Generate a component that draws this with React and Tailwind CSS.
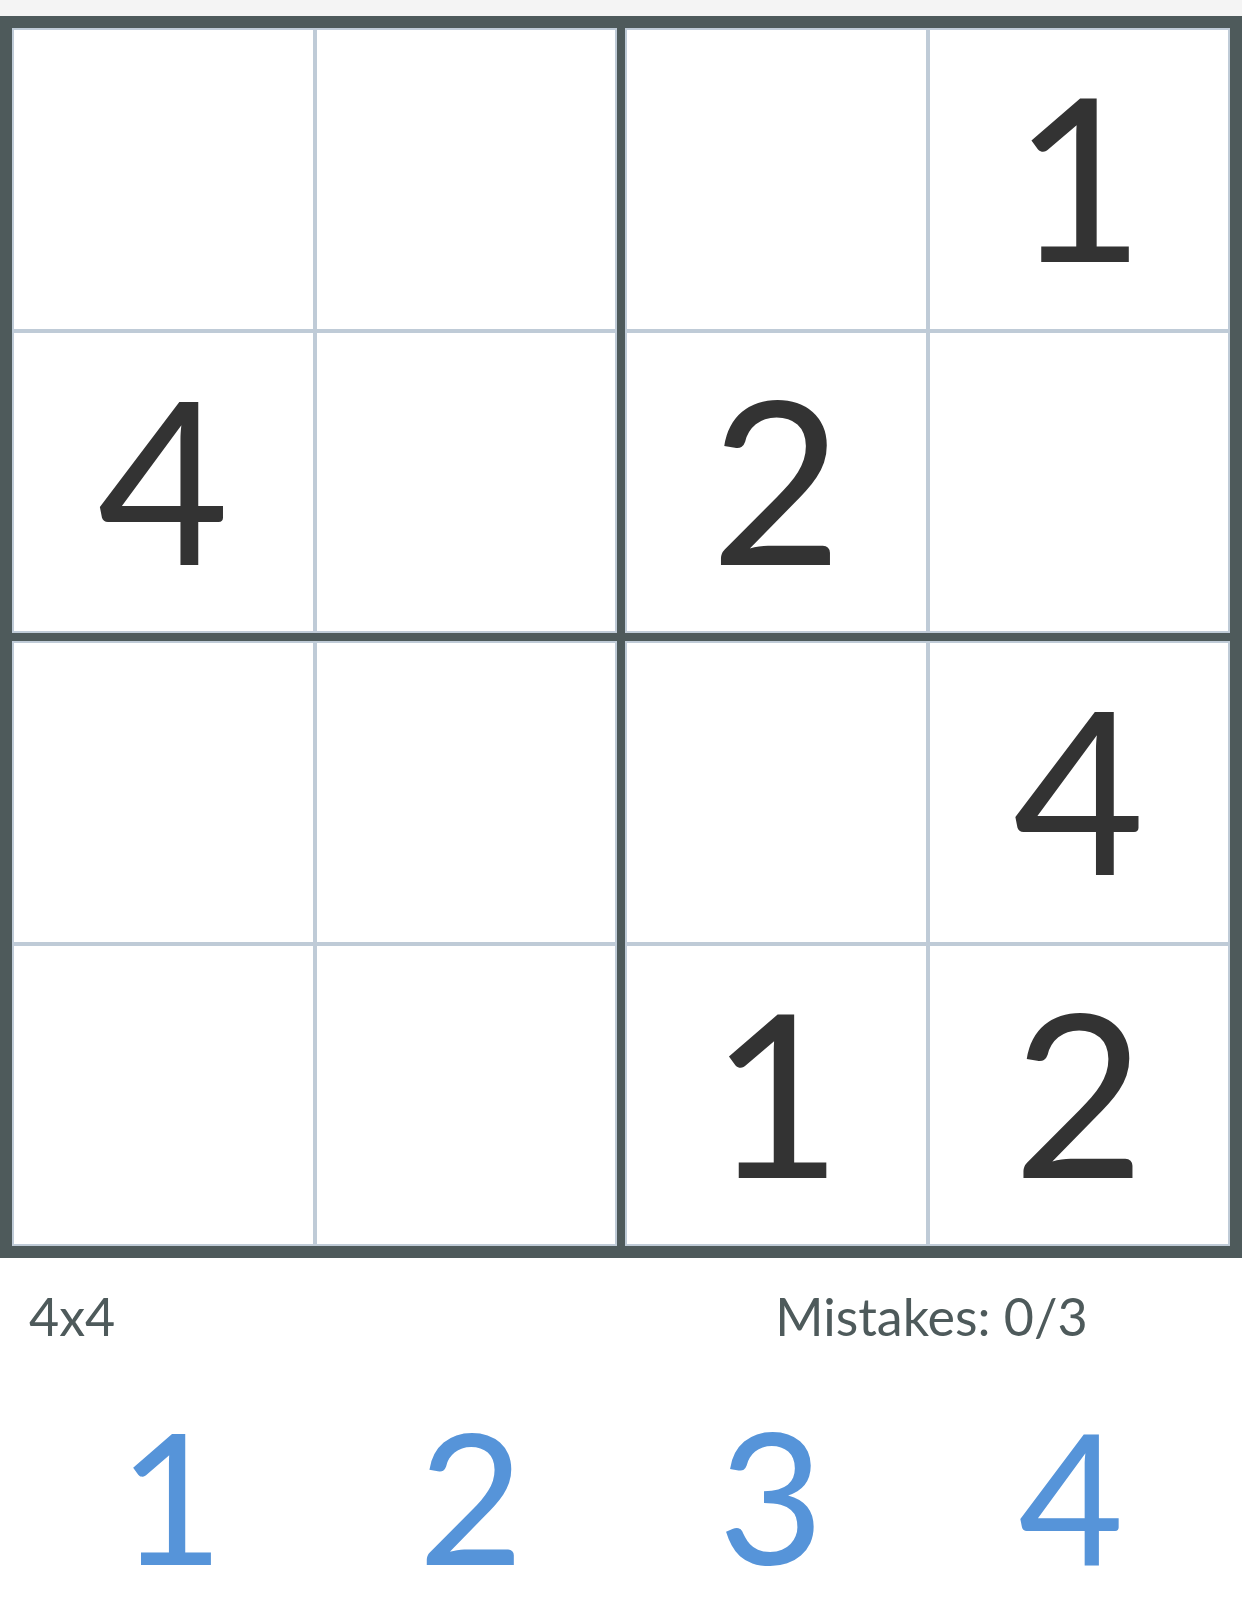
const grid = [
  ['', '', '', '1'],
  ['4', '', '2', ''],
  ['', '', '', '4'],
  ['', '', '1', '2'],
]

function Box({ br, bc }) {
  const cells = []
  for (let r = 0; r < 2; r++) {
    for (let c = 0; c < 2; c++) {
      cells.push(grid[br * 2 + r][bc * 2 + c])
    }
  }
  return (
    <div className="grid grid-cols-2">
      {cells.map((v, i) => (
        <div
          key={i}
          className="aspect-square bg-white border-2 border-[#bfcbd7] flex items-center justify-center pb-[10px] text-[228px] leading-none text-[#333333]"
        >
          {v}
        </div>
      ))}
    </div>
  )
}

export default function App() {
  return (
    <div className="min-h-[1609px] bg-white" style={{ fontFamily: 'Lato, "Open Sans", sans-serif' }}>
      <div className="h-4 bg-[#f4f4f4]" />

      {/* board */}
      <div className="bg-[#4e5a5b] p-3">
        <div className="grid grid-cols-2 gap-2">
          <Box br={0} bc={0} />
          <Box br={0} bc={1} />
          <Box br={1} bc={0} />
          <Box br={1} bc={1} />
        </div>
      </div>

      {/* status */}
      <div className="grid grid-cols-2 mt-8 text-[52px] leading-none text-[#4e5a5b]">
        <div className="pl-[29px]">4x4</div>
        <div className="text-center">Mistakes: 0/3</div>
      </div>

      {/* number pad */}
      <div className="grid grid-cols-4 px-[21px] mt-[62px] text-[182px] leading-none text-[#5694d9]">
        {['1', '2', '3', '4'].map((n) => (
          <button key={n} className="text-center leading-none">
            {n}
          </button>
        ))}
      </div>
    </div>
  )
}
